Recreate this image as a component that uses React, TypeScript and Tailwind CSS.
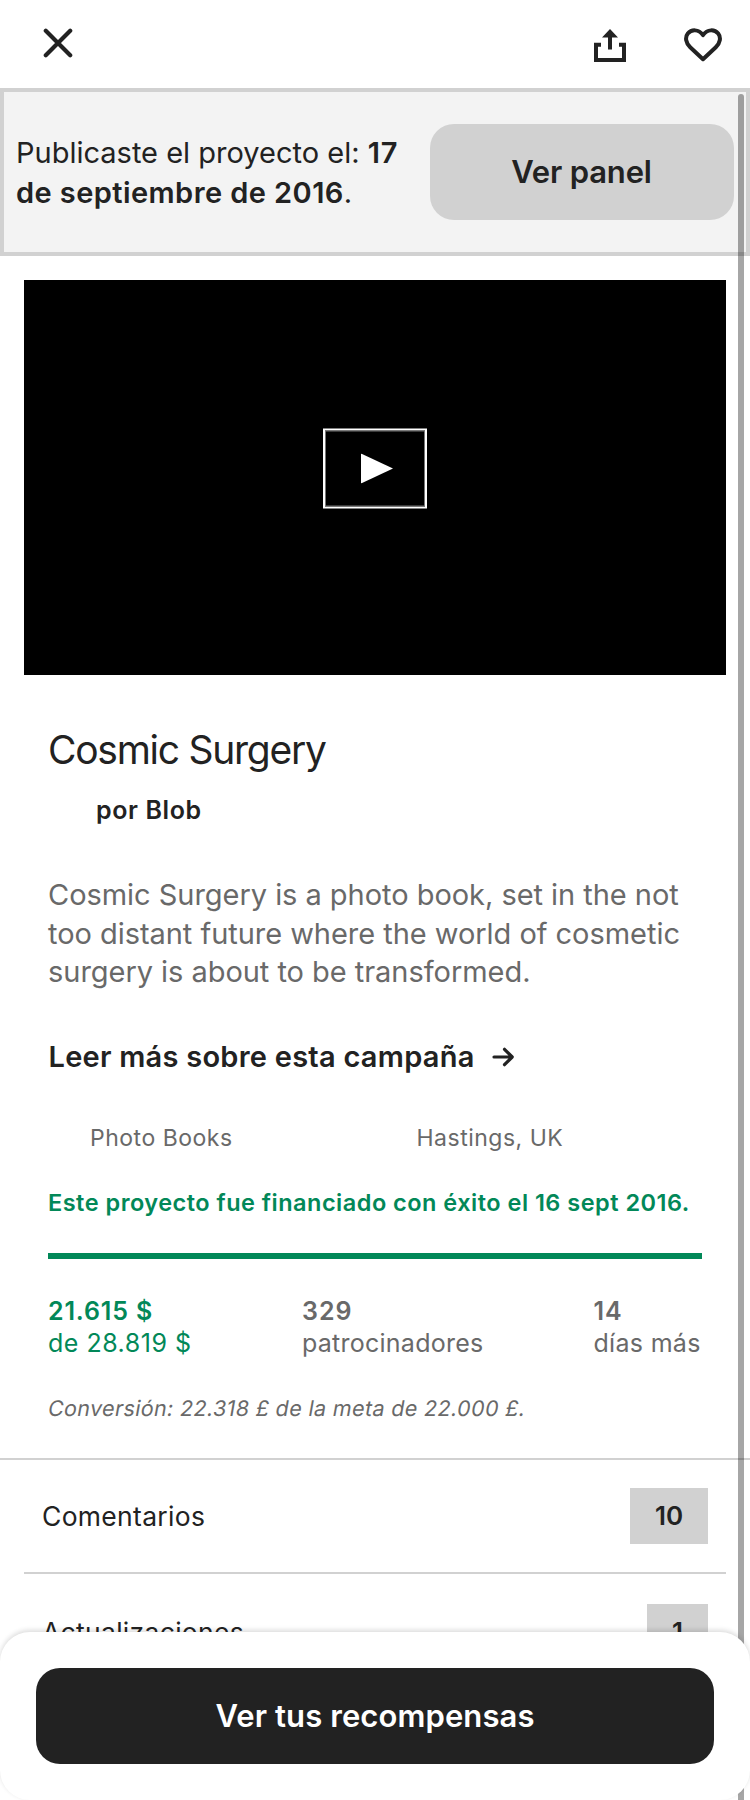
function CloseIcon() {
  return (
    <svg width="30" height="30" viewBox="0 0 30 30" fill="none" stroke="#222222" strokeWidth="4.2" strokeLinecap="round">
      <path d="M2.800 2.800 27.200 27.200M27.200 2.800 2.800 27.200" />
    </svg>
  );
}

function ShareIcon() {
  return (
    <svg width="32" height="33" viewBox="0 0 32 33">
      <path fill="#222222" d="M16 0 24 8.5H18V20.5H14V8.5H8ZM0 13.7H7V17.7H4V29H28V17.7H25V13.7H32V33H0Z" />
    </svg>
  );
}

function HeartIcon() {
  return (
    <svg width="38" height="34" viewBox="0 0 38 34" fill="none" stroke="#222222" strokeWidth="4" strokeLinejoin="round">
      <path d="M19 31.2 6.2 19.2C1.6 14.8 .9 9.3 3.8 5.6 7.5 1.1 14.5 1 19 7.1 23.500 1 30.500 1.100 34.200 5.600 37.100 9.300 36.400 14.800 31.800 19.200Z" />
    </svg>
  );
}

function ArrowIcon() {
  return (
    <svg width="22" height="20" viewBox="0 0 22 20" fill="none" stroke="#222222" strokeWidth="3.2" strokeLinecap="round" strokeLinejoin="round">
      <path d="M2 10H20M12.500 2.300 20.200 10 12.500 17.700" />
    </svg>
  );
}

function Header() {
  return (
    <header className="flex h-[88px] items-start justify-between pl-[43px] pr-[28px] pt-7">
      <button aria-label="Cerrar">
        <CloseIcon />
      </button>
      <div className="flex items-start gap-[58px]">
        <button aria-label="Compartir" className="pt-px">
          <ShareIcon />
        </button>
        <button aria-label="Guardar">
          <HeartIcon />
        </button>
      </div>
    </header>
  );
}

function Banner() {
  return (
    <section className="flex h-[168px] items-center justify-between border-4 border-[#d1d1d1] bg-[#f3f3f3] pl-3 pr-3">
      <p className="pt-0.5 text-[29px] leading-[40px]">
        Publicaste el proyecto el: <b className="font-semibold tracking-[0.9px]">17</b>
        <br />
        <b className="font-semibold tracking-[0.43px]">de septiembre de 2016</b>.
      </p>
      <button className="h-24 w-[304px] rounded-3xl bg-[#d1d1d1] pr-px text-[31px] font-semibold tracking-[-0.18px]">Ver panel</button>
    </section>
  );
}

function Video() {
  return (
    <div className="mx-6 mt-6 flex h-[395px] items-center justify-center bg-black">
      <div className="flex h-20 w-[104px] -translate-y-[9.5px] items-center justify-center border-2 border-white outline outline-1 -outline-offset-3 outline-[#777777]">
        <svg width="32" height="30" viewBox="0 0 32 30" className="ml-[3px]">
          <path d="M0 0 32 15 0 30Z" fill="#fff" />
        </svg>
      </div>
    </div>
  );
}

function Stats() {
  return (
    <div className="mt-9 grid grid-cols-[254px_291.5px_108.5px] whitespace-nowrap text-[25px] leading-8 text-[#696969]">
      <div className="text-[#028858]">
        <div className="font-semibold tracking-[0.86px]">21.615 $</div>
        <div className="tracking-[0.51px]">de 28.819 $</div>
      </div>
      <div>
        <div className="font-semibold tracking-[1px]">329</div>
        <div className="tracking-[0.25px]">patrocinadores</div>
      </div>
      <div>
        <div className="font-semibold tracking-[1px]">14</div>
        <div className="tracking-[0.3px]">días más</div>
      </div>
    </div>
  );
}

function Campaign() {
  return (
    <section className="flex flex-col px-12 pt-[51px]">
      <h1 className="text-[39px] leading-[48px] tracking-[-1.26px]">Cosmic Surgery</h1>
      <p className="mt-5 pl-12 text-[25px] font-semibold leading-8 tracking-[0.6px]">por Blob</p>
      <p className="mt-[50px] whitespace-nowrap text-[29px] leading-[38.5px] tracking-[-0.04px] text-[#696969]">
        Cosmic Surgery is a photo book, set in the not
        <br />
        too distant future where the world of cosmetic
        <br />
        surgery is about to be transformed.
      </p>
      <a className="mt-[45px] flex items-center gap-[17px] pl-[0.5px] text-[29px] font-semibold leading-10 tracking-[0.25px]">
        Leer más sobre esta campaña <ArrowIcon />
      </a>
      <div className="mt-[45px] grid grid-cols-2 text-[23px] leading-8 tracking-[0.5px] text-[#696969]">
        <span className="pl-[42px]">Photo Books</span>
        <span className="pl-[41.5px]">Hastings, UK</span>
      </div>
      <p className="mt-[33px] whitespace-nowrap text-[23.5px] font-semibold leading-8 tracking-[0.49px] text-[#028858]">
        Este proyecto fue financiado con éxito el 16 sept 2016.
      </p>
      <div className="mt-[34px] h-1.5 w-[654px] bg-[#028858]" />
      <Stats />
      <p className="-ml-px mt-[33px] origin-[50%_75%] -skew-x-[10deg] whitespace-nowrap text-[21.5px] leading-8 tracking-[0.36px] text-[#696969]">
        Conversión: 22.318 £ de la meta de 22.000 £.
      </p>
    </section>
  );
}

function Row({ label, count, className, badgeClassName }: { label: string; count: number; className: string; badgeClassName: string }) {
  return (
    <div className={`mx-6 flex items-start justify-between px-[18px] leading-[56px] ${className}`}>
      <span className="text-[26.5px] tracking-[0.3px]">{label}</span>
      <span className={`bg-[#d1d1d1] text-center text-[26px] font-semibold ${badgeClassName}`}>{count}</span>
    </div>
  );
}

export default function App() {
  return (
    <div className="relative h-[1800px] w-[750px] overflow-hidden bg-white font-[Inter,sans-serif] text-[#222222]">
      <Header />
      <Banner />
      <Video />
      <Campaign />
      <div className="mt-[34px] border-t-2 border-[#d1d1d1]">
        <Row label="Comentarios" count={10} className="h-[114px] border-b-2 border-[#d1d1d1] pt-7" badgeClassName="w-[78px]" />
        <Row label="Actualizaciones" count={1} className="pt-[30px]" badgeClassName="w-[61px]" />
      </div>
      <div className="absolute right-1.5 top-[94px] h-[1720px] w-1.5 rounded-full bg-black/35" />
      <div className="absolute inset-x-0 bottom-0 h-[168px] rounded-[30px] bg-white px-9 pt-9 shadow-[0_-2px_5px_rgba(0,0,0,0.14)]">
        <button className="h-24 w-full rounded-3xl bg-[#222222] text-[31px] font-semibold tracking-[0.1px] text-white">
          Ver tus recompensas
        </button>
      </div>
    </div>
  );
}
